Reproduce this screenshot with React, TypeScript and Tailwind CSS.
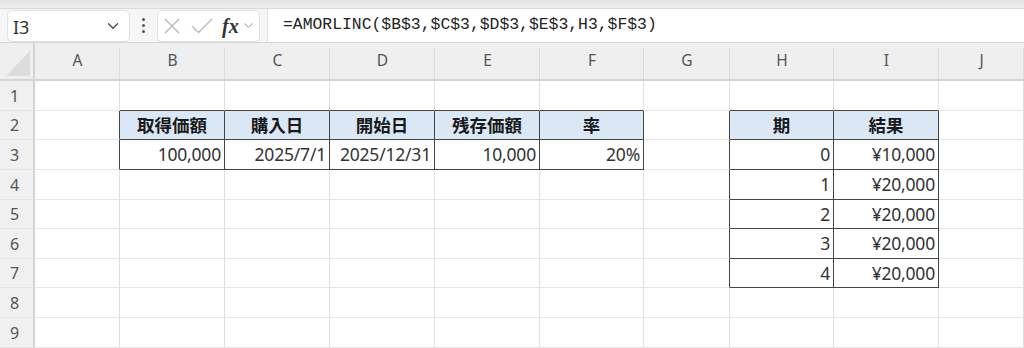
import { ChevronDown } from "lucide-react";

const cols = ["", "A", "B", "C", "D", "E", "F", "G", "H", "I", "J"];
const rowHeights = [30, 29, 30, 30, 29, 30, 29, 30, 30];

// cells with content, keyed by "col,row" (col index 1 = A)
const cells: Record<string, { text: string; head?: boolean }> = {
  "2,2": { text: "取得価額", head: true },
  "3,2": { text: "購入日", head: true },
  "4,2": { text: "開始日", head: true },
  "5,2": { text: "残存価額", head: true },
  "6,2": { text: "率", head: true },
  "2,3": { text: "100,000" },
  "3,3": { text: "2025/7/1" },
  "4,3": { text: "2025/12/31" },
  "5,3": { text: "10,000" },
  "6,3": { text: "20%" },
  "8,2": { text: "期", head: true },
  "9,2": { text: "結果", head: true },
  "8,3": { text: "0" },
  "9,3": { text: "¥10,000" },
  "8,4": { text: "1" },
  "9,4": { text: "¥20,000" },
  "8,5": { text: "2" },
  "9,5": { text: "¥20,000" },
  "8,6": { text: "3" },
  "9,6": { text: "¥20,000" },
  "8,7": { text: "4" },
  "9,7": { text: "¥20,000" },
};

const inTable = (c: number, r: number) => !!cells[`${c},${r}`];

function Cell({ c, r }: { c: number; r: number }) {
  const cell = cells[`${c},${r}`];
  const darkR = inTable(c, r) || inTable(c + 1, r);
  const darkB = inTable(c, r) || inTable(c, r + 1);
  const base = `flex items-center min-w-0 border-r border-b ${
    darkR ? "border-r-[#444]" : "border-r-[#e1e1e1]"
  } ${darkB ? "border-b-[#444]" : "border-b-[#e6e6e6]"}`;
  if (!cell) return <div className={base} />;
  if (cell.head)
    return (
      <div className={`${base} justify-center bg-[#dae8f6] text-[17.5px] font-bold text-[#1a1a1a]`}>
        {cell.text}
      </div>
    );
  return (
    <div className={`${base} justify-end pr-[3px] text-[17.5px] text-[#333] whitespace-nowrap tracking-[-0.2px]`}>
      {cell.text}
    </div>
  );
}

export default function App() {
  return (
    <div
      className="w-[1024px] h-[348px] overflow-hidden bg-white flex flex-col"
      style={{ fontFamily: '"Noto Sans", "Noto Sans CJK JP", sans-serif' }}
    >
      {/* ribbon edge */}
      <div className="h-[9px] bg-gradient-to-b from-[#e4e4e4] to-[#efefef] border-b border-[#d9d9d9]" />

      {/* formula bar */}
      <div className="h-[34px] flex items-center bg-[#f6f6f6] border-b border-[#d6d6d6]">
        <div className="ml-[7px] w-[123px] h-[32px] bg-white border border-[#e2e2e2] rounded-[5px] flex items-center justify-between pl-[5px] pr-[7px]">
          <span className="text-[18px] text-[#333] mt-[3px]">I3</span>
          <ChevronDown size={18} strokeWidth={1.6} className="text-[#444]" />
        </div>
        <div className="w-[27px] flex flex-col items-center gap-[3px]">
          <span className="w-[3px] h-[3px] rounded-full bg-[#555]" />
          <span className="w-[3px] h-[3px] rounded-full bg-[#555]" />
          <span className="w-[3px] h-[3px] rounded-full bg-[#555]" />
        </div>
        <div className="w-[103px] h-[32px] bg-white border border-[#e2e2e2] rounded-[5px] flex items-center pl-[6px]">
          <svg width="16" height="16" viewBox="0 0 16 16" fill="none" stroke="#b8b8b8" strokeWidth="1.3">
            <path d="M1 1 L15 15 M15 1 L1 15" />
          </svg>
          <svg width="22" height="16" viewBox="0 0 22 16" fill="none" stroke="#b8b8b8" strokeWidth="1.3" className="ml-[11px]">
            <path d="M1 8 L7.5 14.5 L21 1" />
          </svg>
          <span
            className="ml-[9px] text-[20px] italic font-bold text-[#333] leading-none"
            style={{ fontFamily: '"Liberation Serif", serif' }}
          >
            fx
          </span>
          <ChevronDown size={15} strokeWidth={1.4} className="ml-[2px] text-[#888]" />
        </div>
        <div className="ml-[7px] flex-1 h-full bg-white border-l border-[#e2e2e2] flex items-center pl-[15px]">
          <span className="text-[16.4px] text-[#222]" style={{ fontFamily: '"Liberation Mono", monospace' }}>
            =AMORLINC($B$3,$C$3,$D$3,$E$3,H3,$F$3)
          </span>
        </div>
      </div>

      {/* sheet grid */}
      <div
        className="grid grid-cols-[35px_85px_105px_105px_105px_105px_104px_86px_104px_105px_85px]"
        style={{ gridTemplateRows: `38px ${rowHeights.map((h) => h + "px").join(" ")}` }}
      >
        {cols.map((col, i) =>
          i === 0 ? (
            <div key="corner" className="bg-[#efefef] border-b-2 border-r-2 border-[#d3d3d3] relative">
              <svg width="33" height="36" className="absolute left-0 top-0">
                <polygon points="30,8 30,33 6,33" fill="#dcdcdc" />
              </svg>
            </div>
          ) : (
            <div
              key={col}
              className="bg-[#efefef] border-b-2 border-[#d3d3d3] flex items-center justify-center text-[15.5px] text-[#555] relative"
            >
              {col}
              <span className="absolute right-0 top-[5px] bottom-0 w-px bg-[#dcdcdc]" />
            </div>
          )
        )}
        {rowHeights.map((_, ri) => {
          const r = ri + 1;
          return [
            <div
              key={`h${r}`}
              className="bg-[#f0f0f0] border-r-2 border-r-[#d3d3d3] border-b border-b-[#e4e4e4] flex items-center pl-[10px] text-[16px] text-[#555]"
            >
              {r}
            </div>,
            ...cols.slice(1).map((_, ci) => <Cell key={`${ci + 1},${r}`} c={ci + 1} r={r} />),
          ];
        })}
      </div>
    </div>
  );
}
